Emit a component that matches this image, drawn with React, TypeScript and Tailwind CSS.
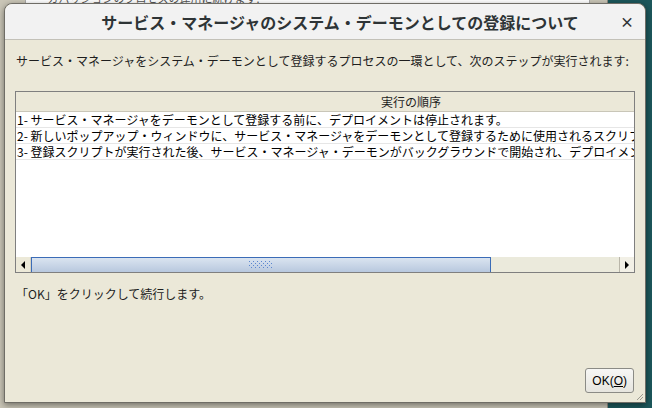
import React from 'react';

const rows = [
  '1- サービス・マネージャをデーモンとして登録する前に、デプロイメントは停止されます。',
  '2- 新しいポップアップ・ウィンドウに、サービス・マネージャをデーモンとして登録するために使用されるスクリプトが表示されます。',
  '3- 登録スクリプトが実行された後、サービス・マネージャ・デーモンがバックグラウンドで開始され、デプロイメントが再開されます。',
];

export default function App() {
  return (
    <div className="relative w-[652px] h-[408px] overflow-hidden bg-[#1c575b] font-['Noto_Sans_CJK_JP','Noto_Sans',sans-serif]">
      {/* window behind the dialog */}
      <div className="absolute left-0 top-0 w-[608px] h-[408px] bg-[#c9c5b6] border-r border-[#8f8b80]">
        <div className="ml-[25px] mr-[17px] -mt-[9px] h-[14px] bg-white border-x border-[#a9a9a9] pl-[8px] text-[11px] leading-[14px] text-[#555] whitespace-nowrap overflow-hidden">
          ・ カバッジョンのプロセスの運用に続けます:
        </div>
      </div>

      {/* dialog */}
      <div className="absolute left-[4px] top-[3px] w-[642px] h-[400px] flex flex-col rounded-t-[8px] bg-[#ebe8d8] border border-[#6f6d66] shadow-[0_2px_6px_rgba(0,0,0,0.45)]">
        {/* title bar */}
        <div className="relative h-[36px] flex items-center justify-center pl-[30px] rounded-t-[8px] bg-[#f2f2f2] border-b border-[#c3c1b8]">
          <span className="text-[16px] font-bold text-[#2e3436] leading-none">
            サービス・マネージャのシステム・デーモンとしての登録について
          </span>
          <span className="absolute right-[11px] top-[10px] text-[14px] font-bold text-[#2e3436] leading-none">×</span>
        </div>

        {/* body */}
        <div className="flex-1 flex flex-col px-[10px] text-[12px] leading-[16px] text-[#1e1e1e]">
          <p className="pt-[13px] pl-[1px] whitespace-nowrap">
            サービス・マネージャをシステム・デーモンとして登録するプロセスの一環として、次のステップが実行されます:
          </p>

          {/* table */}
          <div className="mt-[22px] h-[182px] flex flex-col border border-[#7f7f7f] overflow-hidden">
            <div className="h-[20px] shrink-0 flex bg-[#ebe8d8] border-b border-[#c9c6b8]">
              <div className="w-[790px] shrink-0 text-center leading-[19px]">実行の順序</div>
            </div>
            <div className="flex-1 bg-white">
              {rows.map((r) => (
                <div key={r} className="h-[16px] border-b border-[#e6e6e6] pl-[1px] whitespace-nowrap overflow-hidden leading-[15px] text-black">
                  {r}
                </div>
              ))}
            </div>
            {/* horizontal scrollbar */}
            <div className="h-[15px] shrink-0 flex bg-[#ebeadc]">
              <div className="w-[15px] h-full flex items-center justify-center bg-[#ece9d8] border-r border-[#d6d3c4]">
                <svg width="5" height="8" viewBox="0 0 5 8">
                  <path d="M4 0 L0 4 L4 8 Z" fill="#000" />
                </svg>
              </div>
              <div className="w-[460px] h-full flex items-center justify-center border-t border-x border-[#3b6cb7] bg-gradient-to-b from-[#dae4f0] to-[#b8c8de]">
                <svg width="24" height="8" viewBox="0 0 24 8">
                  {[0, 4, 8, 12, 16, 20].map((x) =>
                    [0, 4].map((y) => (
                      <g key={`${x}-${y}`}>
                        <rect x={x} y={y} width="1" height="1" fill="#5b86cf" />
                        <rect x={x + 2} y={y + 2} width="1" height="1" fill="#5b86cf" />
                      </g>
                    ))
                  )}
                </svg>
              </div>
              <div className="flex-1" />
              <div className="w-[15px] h-full flex items-center justify-center bg-[#f2f0e6] border-l border-[#b9b6a9]">
                <svg width="5" height="8" viewBox="0 0 5 8">
                  <path d="M0 0 L4 4 L0 8 Z" fill="#000" />
                </svg>
              </div>
            </div>
          </div>

          <p className="mt-[13px] pl-[1px]">「OK」をクリックして続行します。</p>

          <div className="mt-auto mb-[9px] self-end mr-[1px]">
            <button className="h-[25px] px-[6px] rounded-[3px] border border-[#8b8b86] bg-gradient-to-b from-[#f7f7f5] to-[#e6e5df] text-[12px] text-black font-['Liberation_Sans','Noto_Sans_CJK_JP',sans-serif]">
              OK(<span className="underline">O</span>)
            </button>
          </div>
        </div>

        {/* resize grip */}
        <svg className="absolute right-[1px] bottom-[1px]" width="9" height="9" viewBox="0 0 9 9">
          <path d="M8 2 L2 8 M8 5 L5 8" stroke="#9c9a90" strokeWidth="1" />
        </svg>
      </div>
    </div>
  );
}
